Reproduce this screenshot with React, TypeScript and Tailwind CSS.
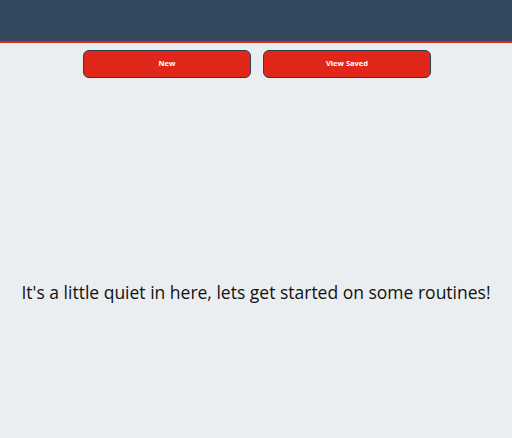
import React from "react";

export default function App() {
  return (
    <div className="w-[512px] h-[438px] bg-[#eaeef0] flex flex-col" style={{ fontFamily: '"Open Sans", "Noto Sans", sans-serif' }}>
      <div className="h-[43px] bg-[#34495e] border-b-2 border-[#e0271a] shrink-0" />
      <div className="flex justify-center gap-[12px] pt-[7px] pl-[2px]">
        <button className="w-[168px] h-[28px] rounded-[6px] bg-[#e0271a] border border-[#2c3e50] text-white text-[7.5px] font-bold">
          New
        </button>
        <button className="w-[168px] h-[28px] rounded-[6px] bg-[#e0271a] border border-[#2c3e50] text-white text-[7.5px] font-bold">
          View Saved
        </button>
      </div>
      <div className="flex-1 flex items-center justify-center pb-[10px]">
        <p className="text-[17.5px] text-[#111] pt-[78px]">It's a little quiet in here, lets get started on some routines!</p>
      </div>
    </div>
  );
}
